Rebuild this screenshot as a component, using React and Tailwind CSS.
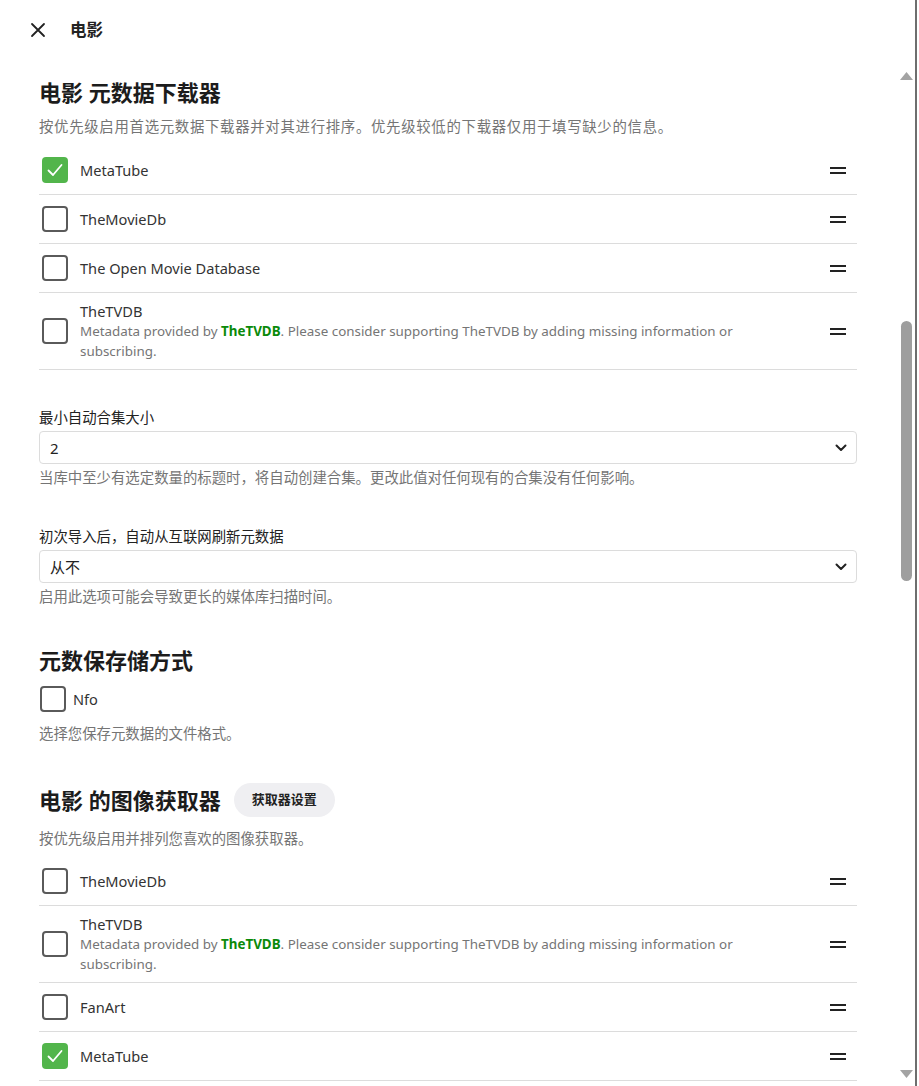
import React from "react";

const FONT = { fontFamily: '"Noto Sans", "Noto Sans CJK SC", sans-serif' };

function Check({ checked, className = "" }) {
  if (checked) {
    return (
      <div className={"w-[26px] h-[26px] rounded-[4px] bg-[#52b54b] flex items-center justify-center shrink-0 " + className}>
        <svg width="20" height="20" viewBox="0 0 20 20" fill="none">
          <path d="M3.5 10.5 L8 15 L16.5 5" stroke="white" strokeWidth="1.8" strokeLinecap="round" strokeLinejoin="round" />
        </svg>
      </div>
    );
  }
  return <div className={"w-[26px] h-[26px] rounded-[4px] border-2 border-[#5a5a5a] shrink-0 " + className} />;
}

function Handle() {
  return (
    <div className="flex flex-col gap-[3px] mr-[11px] shrink-0">
      <div className="w-[16px] h-[2px] bg-[#222]" />
      <div className="w-[16px] h-[2px] bg-[#222]" />
    </div>
  );
}

function Row({ checked, title }) {
  return (
    <div className="h-[49px] border-b border-[#dcdcdc] flex items-center">
      <Check checked={checked} className="ml-[3px]" />
      <div className="ml-[12px] flex-1 text-[14.6px] leading-[20px] text-[#333]">{title}</div>
      <Handle />
    </div>
  );
}

function TvdbRow() {
  return (
    <div className="py-2 border-b border-[#dcdcdc] flex items-center">
      <Check checked={false} className="ml-[3px]" />
      <div className="ml-[12px] flex-1 pr-[80px]">
        <div className="text-[14.6px] leading-[20px] text-[#333]">TheTVDB</div>
        <div className="text-[13.4px] leading-[20px] text-[#757575]">
          Metadata provided by <span className="font-bold text-[#0a8a0a]">TheTVDB</span>. Please consider supporting TheTVDB by adding missing information or subscribing.
        </div>
      </div>
      <Handle />
    </div>
  );
}

function Chevron() {
  return (
    <svg width="12" height="8" viewBox="0 0 12 8" fill="none" className="mr-[9px]">
      <path d="M1.5 1.5 L6 6 L10.5 1.5" stroke="#222" strokeWidth="2" strokeLinecap="round" strokeLinejoin="round" />
    </svg>
  );
}

function SelectField({ label, value, help, top }) {
  return (
    <div className={top}>
      <div className="text-[14.4px] leading-[18px] text-[#222]">{label}</div>
      <div className="mt-[4px] h-[33px] border border-[#dcdcdc] rounded-[4px] flex items-center justify-between">
        <span className="ml-[10px] text-[15px] leading-[20px] text-[#222]">{value}</span>
        <Chevron />
      </div>
      <div className="mt-[5px] text-[14.4px] leading-[18px] text-[#757575]">{help}</div>
    </div>
  );
}

export default function App() {
  return (
    <div className="w-[919px] h-[1086px] bg-white flex overflow-hidden" style={FONT}>
      <div className="flex-1 flex flex-col">
        <div className="h-[60px] flex items-center shrink-0">
          <svg width="16" height="16" viewBox="0 0 16 16" className="ml-[30px]" fill="none">
            <path d="M2 2 L14 14 M14 2 L2 14" stroke="#222" strokeWidth="1.8" strokeLinecap="round" />
          </svg>
          <div className="ml-[24px] text-[16.5px] leading-[20px] font-bold text-[#222]">电影</div>
        </div>
        <div className="flex-1 flex">
          <div className="flex-1 pl-[39px] pr-[40px]">
            <div className="mt-[18px] text-[22px] leading-[28px] font-bold text-[#1c1c1c]">电影 元数据下载器</div>
            <div className="mt-[11px] text-[14.4px] leading-[20px] tracking-[0.7px] text-[#757575]">按优先级启用首选元数据下载器并对其进行排序。优先级较低的下载器仅用于填写缺少的信息。</div>
            <div className="mt-[9px]">
              <Row checked title="MetaTube" />
              <Row title="TheMovieDb" />
              <Row title="The Open Movie Database" />
              <TvdbRow />
            </div>

            <SelectField
              top="mt-[39px]"
              label="最小自动合集大小"
              value="2"
              help="当库中至少有选定数量的标题时，将自动创建合集。更改此值对任何现有的合集没有任何影响。"
            />
            <SelectField
              top="mt-[41px]"
              label="初次导入后，自动从互联网刷新元数据"
              value="从不"
              help="启用此选项可能会导致更长的媒体库扫描时间。"
            />

            <div className="mt-[40px] text-[22px] leading-[28px] font-bold text-[#1c1c1c]">元数保存储方式</div>
            <div className="mt-[12px] flex items-center">
              <Check checked={false} className="ml-[1px]" />
              <span className="ml-[7px] text-[14.6px] leading-[20px] text-[#333]">Nfo</span>
            </div>
            <div className="mt-[13px] text-[14.4px] leading-[18px] text-[#757575]">选择您保存元数据的文件格式。</div>

            <div className="mt-[40px] flex items-center">
              <div className="text-[22px] leading-[28px] font-bold text-[#1c1c1c]">电影 的图像获取器</div>
              <div className="ml-[13px] h-[34px] px-[18px] rounded-full bg-[#efeff2] flex items-center text-[13px] font-semibold text-[#222]">获取器设置</div>
            </div>
            <div className="mt-[12px] text-[14.4px] leading-[20px] text-[#757575]">按优先级启用并排列您喜欢的图像获取器。</div>
            <div className="mt-[8px]">
              <Row title="TheMovieDb" />
              <TvdbRow />
              <Row title="FanArt" />
              <Row checked title="MetaTube" />
            </div>
          </div>
          <div className="w-[18px] flex flex-col items-center pt-[12px] pb-[8px] shrink-0">
            <svg width="13" height="8" viewBox="0 0 13 8"><path d="M6.5 0 L13 8 L0 8 Z" fill="#a3a3a3" /></svg>
            <div className="mt-[241px] w-[11px] h-[260px] rounded-full bg-[#9e9e9e]" />
            <div className="flex-1" />
            <svg width="13" height="8" viewBox="0 0 13 8"><path d="M0 0 L13 0 L6.5 8 Z" fill="#a3a3a3" /></svg>
          </div>
        </div>
      </div>
      <div className="w-[2px] bg-[#6e6e6e] shrink-0" />
      <div className="w-[2px] bg-white shrink-0" />
    </div>
  );
}
